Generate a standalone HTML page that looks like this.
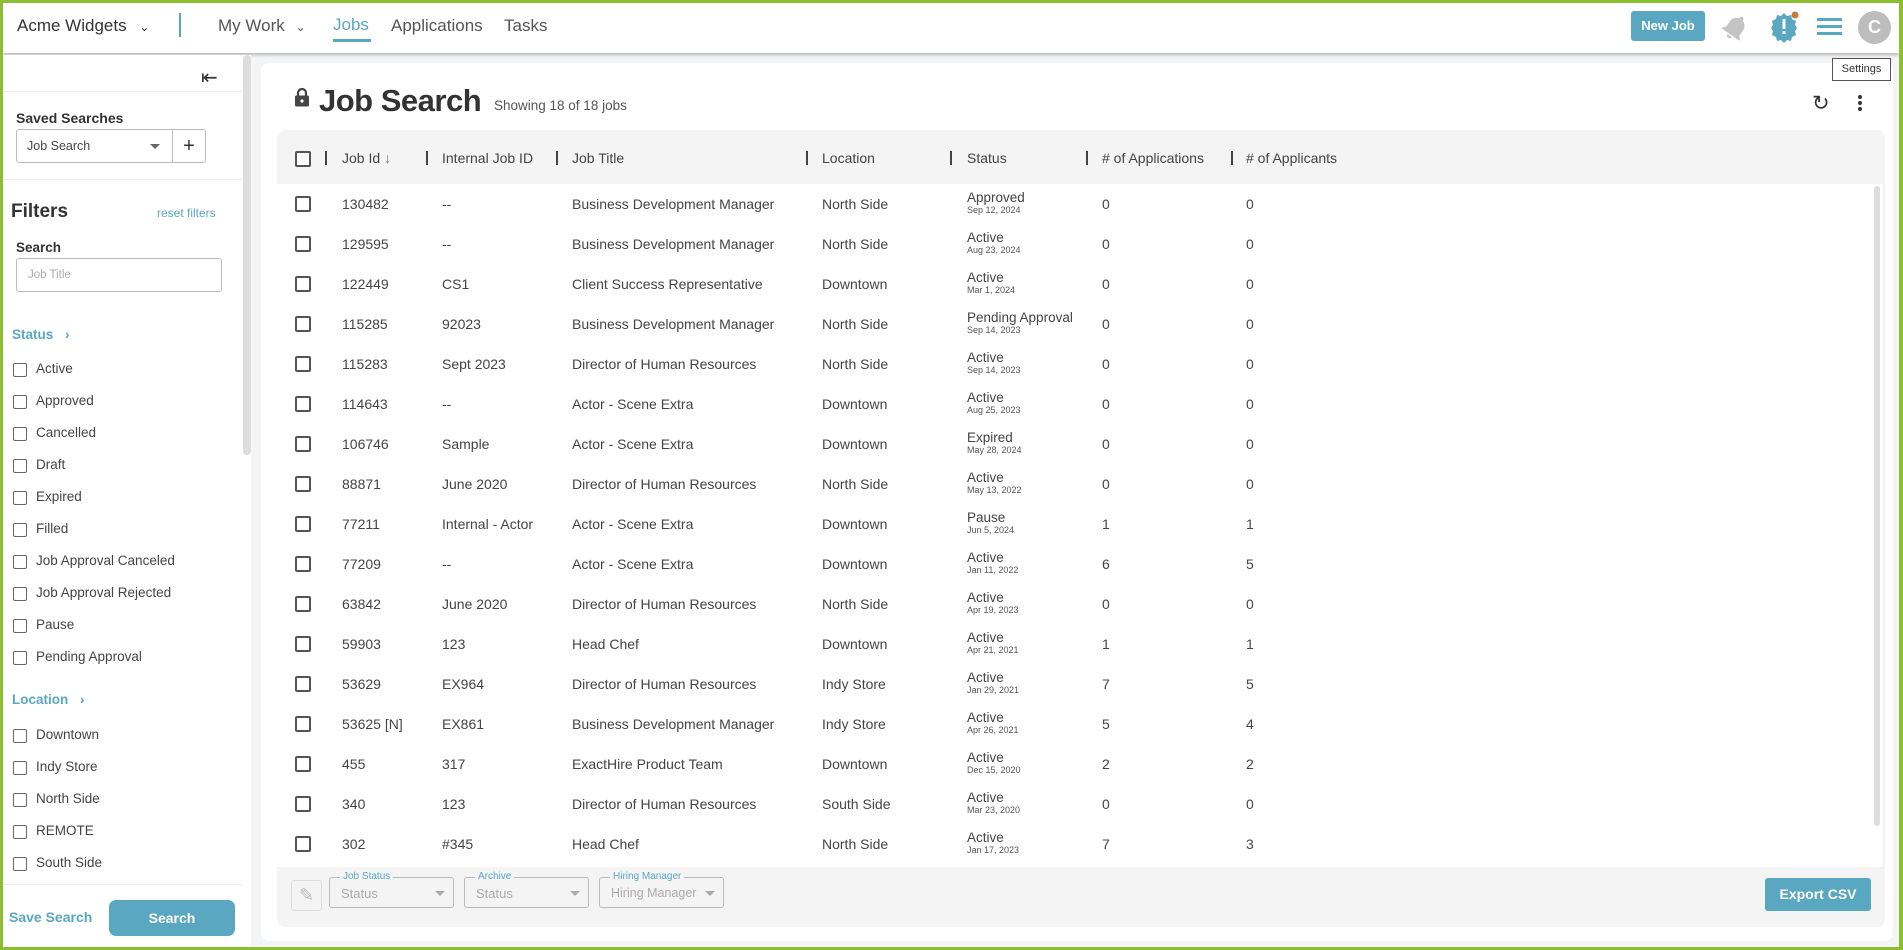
<!DOCTYPE html>
<html><head><meta charset="utf-8"><style>
*{box-sizing:border-box;margin:0;padding:0}
body{width:1903px;height:950px;overflow:hidden;font-family:"Liberation Sans",sans-serif;color:#444;background:#8cbf2f;position:relative}
.frame{position:absolute;left:3px;top:3px;width:1896px;height:944px;background:#f3f4f5;overflow:hidden}
.a{position:absolute;white-space:nowrap}
.hdr{position:absolute;left:0;top:0;width:1896px;height:50px;background:#fff;box-shadow:0 2px 3px rgba(0,0,0,.25)}
.side{position:absolute;left:0;top:52px;width:248px;height:892px;background:#fff}
.card{position:absolute;left:258px;top:60px;width:1632px;height:878px;background:#fff;border-radius:8px}
.cb{position:absolute;width:16px;height:16px;border:2px solid #555;border-radius:2px;background:#fff}
.scb{position:absolute;width:14px;height:14px;border:1.5px solid #666;border-radius:2px}
.t{font-size:14px;color:#444}
.lbl{font-size:13.5px;color:#444}
.sep{position:absolute;top:148px;width:2px;height:14px;background:#444}
.h{font-size:14px;color:#444;top:147px}
.st{position:absolute;font-size:13.5px;line-height:15px}
.st small{display:block;font-size:9px;line-height:11px;color:#555}
.sel{position:absolute;height:31px;border:1px solid #bbb;border-radius:3px;top:874px}
.sel .l{position:absolute;top:-7px;left:10px;background:#f4f4f4;font-size:10px;color:#5aa7c2;padding:0 3px}
.sel .v{position:absolute;top:8px;left:11px;font-size:13px;color:#aaa}
.sel .ar{position:absolute;right:8px;top:13px;border:5px solid transparent;border-top:5px solid #aaa;border-bottom:0}
</style></head><body><div class="frame">
<div class="hdr">
<div class="a" style="left:14px;top:13px;font-size:17px;color:#333">Acme Widgets <span style="font-size:12px;margin-left:8px">&#8964;</span></div>
<div class="a" style="left:176px;top:10px;width:2px;height:24px;background:#5aa7c2"></div>
<div class="a" style="left:215px;top:13px;font-size:17px;color:#555">My Work <span style="font-size:12px;margin-left:6px">&#8964;</span></div>
<div class="a" style="left:330px;top:12px;font-size:17px;color:#5aa7c2">Jobs</div>
<div class="a" style="left:330px;top:36px;width:38px;height:3px;background:#5aa7c2"></div>
<div class="a" style="left:388px;top:13px;font-size:17px;color:#555">Applications</div>
<div class="a" style="left:501px;top:13px;font-size:17px;color:#555">Tasks</div>
<div class="a" style="left:1628px;top:8px;width:74px;height:30px;background:#5aa7c2;border-radius:3px;color:#fff;font-weight:bold;font-size:13px;text-align:center;line-height:30px">New Job</div>
<svg class="a" style="left:1716px;top:9px" width="32" height="32" viewBox="0 0 24 24"><g transform="rotate(35 12 12)"><path d="M12 2a1.5 1.5 0 0 0-1.5 1.5v.7A6 6 0 0 0 6 10v5l-2 2v1h16v-1l-2-2v-5a6 6 0 0 0-4.5-5.8v-.7A1.5 1.5 0 0 0 12 2zm-2 17a2 2 0 0 0 4 0z" fill="#c4c4c4"/></g></svg>
<svg class="a" style="left:1764px;top:7px" width="34" height="34" viewBox="0 0 34 34"><path d="M17 3l3 3 4-1 1 4 4 2-1 4 2 3-2 3 1 4-4 2-1 4-4-1-3 3-3-3-4 1-1-4-4-2 1-4-2-3 2-3-1-4 4-2 1-4 4 1z" fill="#5aa7c2"/><rect x="15.5" y="9" width="3" height="10" fill="#fff"/><rect x="15.5" y="21" width="3" height="3" fill="#fff"/><circle cx="28" cy="5" r="3.5" fill="#c97a3a"/></svg>
<div class="a" style="left:1814px;top:15px;width:25px;height:3px;background:#5aa7c2;box-shadow:0 7px 0 #5aa7c2,0 14px 0 #5aa7c2"></div>
<div class="a" style="left:1855px;top:8px;width:33px;height:33px;border-radius:50%;background:#bdbdbd;color:#fff;font-weight:bold;font-size:18px;text-align:center;line-height:33px">C</div>
</div>
<div class="a" style="left:1829px;top:55px;width:59px;height:23px;border:1px solid #555;background:#fff;font-size:11px;text-align:center;line-height:21px;color:#333;z-index:3">Settings</div>
<div class="side">
<div class="a" style="left:198px;top:10px;font-size:20px;color:#333">&#8676;</div>
<div class="a" style="left:0;top:36px;width:240px;height:1px;background:#eee"></div>
<div class="a" style="left:240px;top:0;width:8px;height:400px;background:#ddd;border-radius:4px"></div>
<div class="a" style="left:13px;top:55px;font-size:14px;font-weight:bold;color:#333">Saved Searches</div>
<div class="a" style="left:13px;top:74px;width:157px;height:34px;border:1px solid #bbb;border-radius:3px 0 0 3px"><span class="a" style="left:10px;top:9px;font-size:12.5px;color:#444">Job Search</span><span class="a" style="right:12px;top:14px;border:5px solid transparent;border-top:5px solid #666;border-bottom:0"></span></div>
<div class="a" style="left:169px;top:74px;width:34px;height:34px;border:1px solid #bbb;border-radius:0 3px 3px 0;text-align:center;line-height:32px;font-size:20px;color:#333">+</div>
<div class="a" style="left:0;top:124px;width:240px;height:1px;background:#eee"></div>
<div class="a" style="left:8px;top:146px;font-size:19px;font-weight:bold;color:#333">Filters</div>
<div class="a" style="left:154px;top:151px;font-size:12px;color:#5aa7c2">reset filters</div>
<div class="a" style="left:13px;top:185px;font-size:13.5px;font-weight:bold;color:#333">Search</div>
<div class="a" style="left:13px;top:203px;width:206px;height:34px;border:1px solid #bbb;border-radius:3px"><span class="a" style="left:11px;top:10px;font-size:11.5px;color:#aaa">Job Title</span></div>
<div class="a" style="left:9px;top:272px;font-size:13.5px;font-weight:bold;color:#5aa7c2">Status <span style="margin-left:8px">&#8250;</span></div>
<div class="scb" style="left:10px;top:308px"></div><div class="a lbl" style="left:33px;top:306px">Active</div>
<div class="scb" style="left:10px;top:340px"></div><div class="a lbl" style="left:33px;top:338px">Approved</div>
<div class="scb" style="left:10px;top:372px"></div><div class="a lbl" style="left:33px;top:370px">Cancelled</div>
<div class="scb" style="left:10px;top:404px"></div><div class="a lbl" style="left:33px;top:402px">Draft</div>
<div class="scb" style="left:10px;top:436px"></div><div class="a lbl" style="left:33px;top:434px">Expired</div>
<div class="scb" style="left:10px;top:468px"></div><div class="a lbl" style="left:33px;top:466px">Filled</div>
<div class="scb" style="left:10px;top:500px"></div><div class="a lbl" style="left:33px;top:498px">Job Approval Canceled</div>
<div class="scb" style="left:10px;top:532px"></div><div class="a lbl" style="left:33px;top:530px">Job Approval Rejected</div>
<div class="scb" style="left:10px;top:564px"></div><div class="a lbl" style="left:33px;top:562px">Pause</div>
<div class="scb" style="left:10px;top:596px"></div><div class="a lbl" style="left:33px;top:594px">Pending Approval</div>
<div class="a" style="left:9px;top:637px;font-size:13.5px;font-weight:bold;color:#5aa7c2">Location <span style="margin-left:8px">&#8250;</span></div>
<div class="scb" style="left:10px;top:674px"></div><div class="a lbl" style="left:33px;top:672px">Downtown</div>
<div class="scb" style="left:10px;top:706px"></div><div class="a lbl" style="left:33px;top:704px">Indy Store</div>
<div class="scb" style="left:10px;top:738px"></div><div class="a lbl" style="left:33px;top:736px">North Side</div>
<div class="scb" style="left:10px;top:770px"></div><div class="a lbl" style="left:33px;top:768px">REMOTE</div>
<div class="scb" style="left:10px;top:802px"></div><div class="a lbl" style="left:33px;top:800px">South Side</div>
<div class="a" style="left:0;top:829px;width:240px;height:1px;background:#eee"></div>
<div class="a" style="left:6px;top:854px;font-size:14px;font-weight:bold;color:#5aa7c2">Save Search</div>
<div class="a" style="left:106px;top:845px;width:126px;height:36px;border-radius:7px;background:#5aa7c2;color:#fff;font-weight:bold;font-size:14px;text-align:center;line-height:36px">Search</div>
</div>
<div class="card"></div>
<div class="a" style="left:274px;top:127px;width:1608px;height:797px;background:#f4f4f4;border-radius:8px"></div>
<div class="a" style="left:274px;top:181px;width:1606px;height:683px;background:#fff"></div>
<div class="a" style="left:1871px;top:183px;width:6px;height:640px;background:#ddd;border-radius:3px"></div>
<svg class="a" style="left:291px;top:84px" width="16" height="20" viewBox="0 0 16 20"><path d="M4 9V6a4 4 0 0 1 8 0v3" stroke="#444" stroke-width="2.2" fill="none"/><rect x="1" y="8.5" width="14" height="11" rx="1.5" fill="#444"/><circle cx="8" cy="14" r="1.6" fill="#fff"/></svg>
<div class="a" style="left:316px;top:80px;font-size:31px;font-weight:bold;color:#333;letter-spacing:-.5px">Job Search</div>
<div class="a" style="left:491px;top:95px;font-size:13.5px;color:#555">Showing 18 of 18 jobs</div>
<div class="a" style="left:1809px;top:88px;font-size:21px;color:#333">&#8635;</div>
<div class="a" style="left:1855px;top:92px;width:4px;height:4px;border-radius:50%;background:#333;box-shadow:0 6px 0 #333,0 12px 0 #333"></div>
<div class="cb" style="left:292px;top:148px"></div>
<div class="sep" style="left:322px"></div><div class="a h" style="left:339px">Job Id <span style="color:#777">&#8595;</span></div>
<div class="sep" style="left:423px"></div><div class="a h" style="left:439px">Internal Job ID</div>
<div class="sep" style="left:553px"></div><div class="a h" style="left:569px">Job Title</div>
<div class="sep" style="left:803px"></div><div class="a h" style="left:819px">Location</div>
<div class="sep" style="left:947px"></div><div class="a h" style="left:964px">Status</div>
<div class="sep" style="left:1083px"></div><div class="a h" style="left:1099px"># of Applications</div>
<div class="sep" style="left:1228px"></div><div class="a h" style="left:1243px"># of Applicants</div>

<div class="a" style="left:0;top:0">
<div class="cb" style="left:292px;top:193px"></div><div class="a t" style="left:339px;top:193px">130482</div><div class="a t" style="left:439px;top:193px">--</div><div class="a t" style="left:569px;top:193px">Business Development Manager</div><div class="a t" style="left:819px;top:193px">North Side</div><div class="st" style="left:964px;top:187px">Approved<small>Sep 12, 2024</small></div><div class="a t" style="left:1099px;top:193px">0</div><div class="a t" style="left:1243px;top:193px">0</div>
<div class="cb" style="left:292px;top:233px"></div><div class="a t" style="left:339px;top:233px">129595</div><div class="a t" style="left:439px;top:233px">--</div><div class="a t" style="left:569px;top:233px">Business Development Manager</div><div class="a t" style="left:819px;top:233px">North Side</div><div class="st" style="left:964px;top:227px">Active<small>Aug 23, 2024</small></div><div class="a t" style="left:1099px;top:233px">0</div><div class="a t" style="left:1243px;top:233px">0</div>
<div class="cb" style="left:292px;top:273px"></div><div class="a t" style="left:339px;top:273px">122449</div><div class="a t" style="left:439px;top:273px">CS1</div><div class="a t" style="left:569px;top:273px">Client Success Representative</div><div class="a t" style="left:819px;top:273px">Downtown</div><div class="st" style="left:964px;top:267px">Active<small>Mar 1, 2024</small></div><div class="a t" style="left:1099px;top:273px">0</div><div class="a t" style="left:1243px;top:273px">0</div>
<div class="cb" style="left:292px;top:313px"></div><div class="a t" style="left:339px;top:313px">115285</div><div class="a t" style="left:439px;top:313px">92023</div><div class="a t" style="left:569px;top:313px">Business Development Manager</div><div class="a t" style="left:819px;top:313px">North Side</div><div class="st" style="left:964px;top:307px">Pending Approval<small>Sep 14, 2023</small></div><div class="a t" style="left:1099px;top:313px">0</div><div class="a t" style="left:1243px;top:313px">0</div>
<div class="cb" style="left:292px;top:353px"></div><div class="a t" style="left:339px;top:353px">115283</div><div class="a t" style="left:439px;top:353px">Sept 2023</div><div class="a t" style="left:569px;top:353px">Director of Human Resources</div><div class="a t" style="left:819px;top:353px">North Side</div><div class="st" style="left:964px;top:347px">Active<small>Sep 14, 2023</small></div><div class="a t" style="left:1099px;top:353px">0</div><div class="a t" style="left:1243px;top:353px">0</div>
<div class="cb" style="left:292px;top:393px"></div><div class="a t" style="left:339px;top:393px">114643</div><div class="a t" style="left:439px;top:393px">--</div><div class="a t" style="left:569px;top:393px">Actor - Scene Extra</div><div class="a t" style="left:819px;top:393px">Downtown</div><div class="st" style="left:964px;top:387px">Active<small>Aug 25, 2023</small></div><div class="a t" style="left:1099px;top:393px">0</div><div class="a t" style="left:1243px;top:393px">0</div>
<div class="cb" style="left:292px;top:433px"></div><div class="a t" style="left:339px;top:433px">106746</div><div class="a t" style="left:439px;top:433px">Sample</div><div class="a t" style="left:569px;top:433px">Actor - Scene Extra</div><div class="a t" style="left:819px;top:433px">Downtown</div><div class="st" style="left:964px;top:427px">Expired<small>May 28, 2024</small></div><div class="a t" style="left:1099px;top:433px">0</div><div class="a t" style="left:1243px;top:433px">0</div>
<div class="cb" style="left:292px;top:473px"></div><div class="a t" style="left:339px;top:473px">88871</div><div class="a t" style="left:439px;top:473px">June 2020</div><div class="a t" style="left:569px;top:473px">Director of Human Resources</div><div class="a t" style="left:819px;top:473px">North Side</div><div class="st" style="left:964px;top:467px">Active<small>May 13, 2022</small></div><div class="a t" style="left:1099px;top:473px">0</div><div class="a t" style="left:1243px;top:473px">0</div>
<div class="cb" style="left:292px;top:513px"></div><div class="a t" style="left:339px;top:513px">77211</div><div class="a t" style="left:439px;top:513px">Internal - Actor</div><div class="a t" style="left:569px;top:513px">Actor - Scene Extra</div><div class="a t" style="left:819px;top:513px">Downtown</div><div class="st" style="left:964px;top:507px">Pause<small>Jun 5, 2024</small></div><div class="a t" style="left:1099px;top:513px">1</div><div class="a t" style="left:1243px;top:513px">1</div>
<div class="cb" style="left:292px;top:553px"></div><div class="a t" style="left:339px;top:553px">77209</div><div class="a t" style="left:439px;top:553px">--</div><div class="a t" style="left:569px;top:553px">Actor - Scene Extra</div><div class="a t" style="left:819px;top:553px">Downtown</div><div class="st" style="left:964px;top:547px">Active<small>Jan 11, 2022</small></div><div class="a t" style="left:1099px;top:553px">6</div><div class="a t" style="left:1243px;top:553px">5</div>
<div class="cb" style="left:292px;top:593px"></div><div class="a t" style="left:339px;top:593px">63842</div><div class="a t" style="left:439px;top:593px">June 2020</div><div class="a t" style="left:569px;top:593px">Director of Human Resources</div><div class="a t" style="left:819px;top:593px">North Side</div><div class="st" style="left:964px;top:587px">Active<small>Apr 19, 2023</small></div><div class="a t" style="left:1099px;top:593px">0</div><div class="a t" style="left:1243px;top:593px">0</div>
<div class="cb" style="left:292px;top:633px"></div><div class="a t" style="left:339px;top:633px">59903</div><div class="a t" style="left:439px;top:633px">123</div><div class="a t" style="left:569px;top:633px">Head Chef</div><div class="a t" style="left:819px;top:633px">Downtown</div><div class="st" style="left:964px;top:627px">Active<small>Apr 21, 2021</small></div><div class="a t" style="left:1099px;top:633px">1</div><div class="a t" style="left:1243px;top:633px">1</div>
<div class="cb" style="left:292px;top:673px"></div><div class="a t" style="left:339px;top:673px">53629</div><div class="a t" style="left:439px;top:673px">EX964</div><div class="a t" style="left:569px;top:673px">Director of Human Resources</div><div class="a t" style="left:819px;top:673px">Indy Store</div><div class="st" style="left:964px;top:667px">Active<small>Jan 29, 2021</small></div><div class="a t" style="left:1099px;top:673px">7</div><div class="a t" style="left:1243px;top:673px">5</div>
<div class="cb" style="left:292px;top:713px"></div><div class="a t" style="left:339px;top:713px">53625 [N]</div><div class="a t" style="left:439px;top:713px">EX861</div><div class="a t" style="left:569px;top:713px">Business Development Manager</div><div class="a t" style="left:819px;top:713px">Indy Store</div><div class="st" style="left:964px;top:707px">Active<small>Apr 26, 2021</small></div><div class="a t" style="left:1099px;top:713px">5</div><div class="a t" style="left:1243px;top:713px">4</div>
<div class="cb" style="left:292px;top:753px"></div><div class="a t" style="left:339px;top:753px">455</div><div class="a t" style="left:439px;top:753px">317</div><div class="a t" style="left:569px;top:753px">ExactHire Product Team</div><div class="a t" style="left:819px;top:753px">Downtown</div><div class="st" style="left:964px;top:747px">Active<small>Dec 15, 2020</small></div><div class="a t" style="left:1099px;top:753px">2</div><div class="a t" style="left:1243px;top:753px">2</div>
<div class="cb" style="left:292px;top:793px"></div><div class="a t" style="left:339px;top:793px">340</div><div class="a t" style="left:439px;top:793px">123</div><div class="a t" style="left:569px;top:793px">Director of Human Resources</div><div class="a t" style="left:819px;top:793px">South Side</div><div class="st" style="left:964px;top:787px">Active<small>Mar 23, 2020</small></div><div class="a t" style="left:1099px;top:793px">0</div><div class="a t" style="left:1243px;top:793px">0</div>
<div class="cb" style="left:292px;top:833px"></div><div class="a t" style="left:339px;top:833px">302</div><div class="a t" style="left:439px;top:833px">#345</div><div class="a t" style="left:569px;top:833px">Head Chef</div><div class="a t" style="left:819px;top:833px">North Side</div><div class="st" style="left:964px;top:827px">Active<small>Jan 17, 2023</small></div><div class="a t" style="left:1099px;top:833px">7</div><div class="a t" style="left:1243px;top:833px">3</div>
</div>
<div class="a" style="left:288px;top:877px;width:31px;height:31px;border:1px solid #ddd;border-radius:3px;text-align:center;line-height:29px;color:#bbb;font-size:18px">&#9998;</div>
<div class="sel" style="left:326px;width:125px"><span class="l">Job Status</span><span class="v">Status</span><span class="ar"></span></div>
<div class="sel" style="left:461px;width:125px"><span class="l">Archive</span><span class="v">Status</span><span class="ar"></span></div>
<div class="sel" style="left:596px;width:125px"><span class="l">Hiring Manager</span><span class="v" style="font-size:12.5px">Hiring Manager</span><span class="ar"></span></div>
<div class="a" style="left:1762px;top:875px;width:106px;height:33px;background:#5aa7c2;border-radius:3px;color:#fff;font-weight:bold;font-size:14px;text-align:center;line-height:33px">Export CSV</div>
</div></body></html>
